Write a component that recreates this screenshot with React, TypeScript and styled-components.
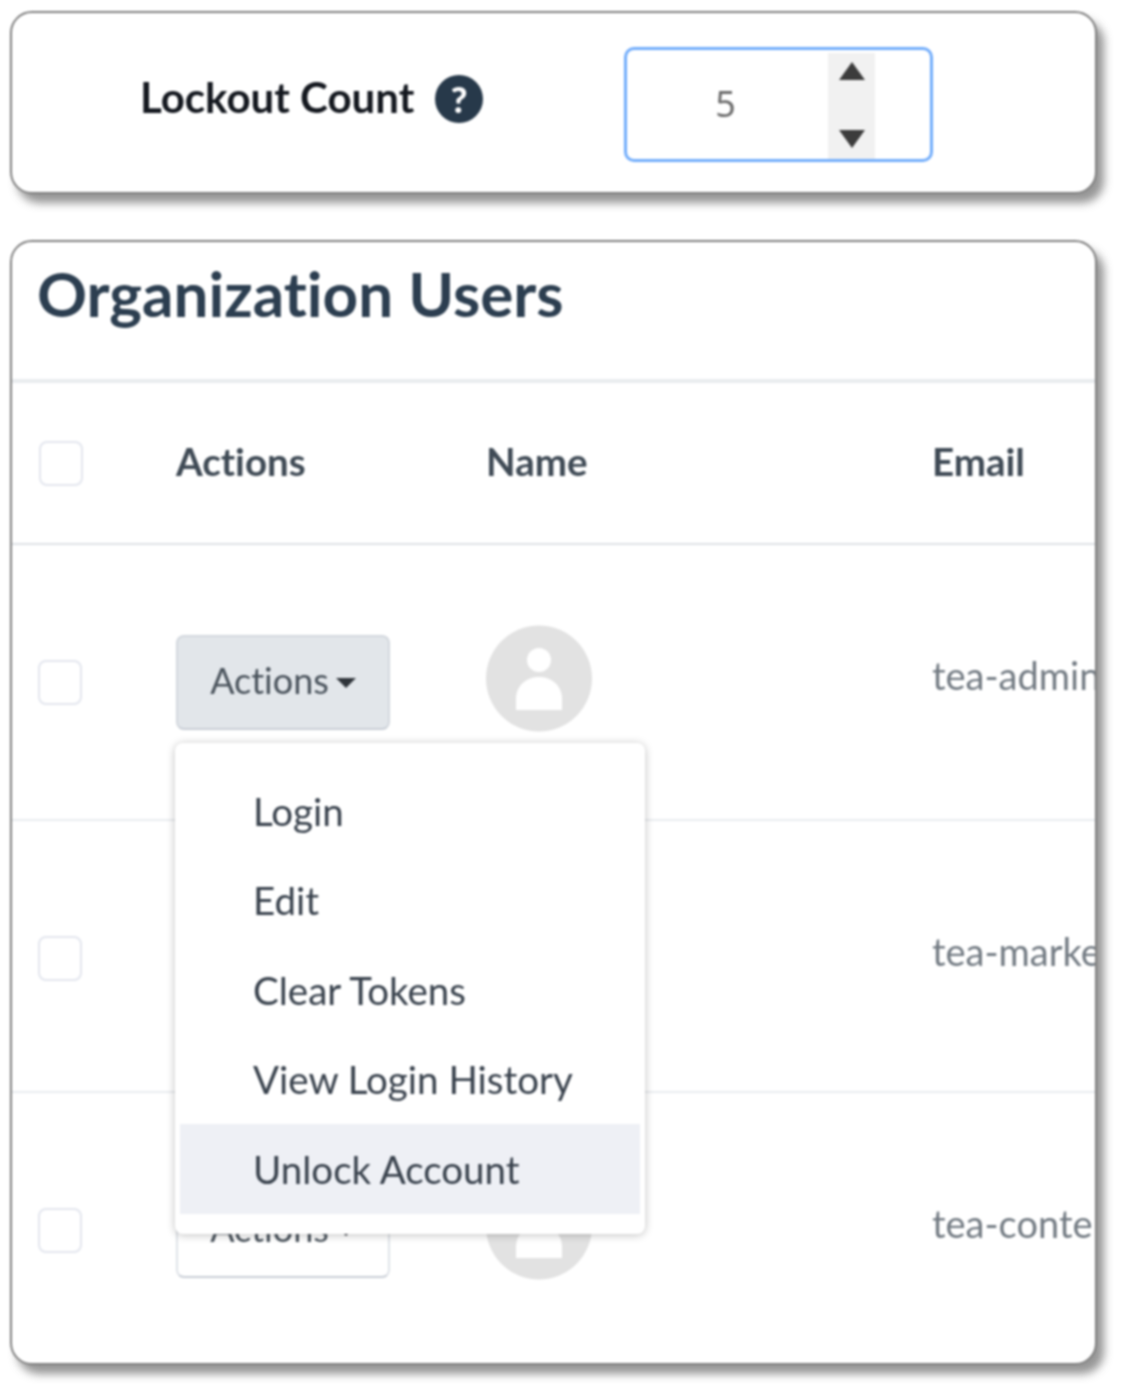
import React from 'react'
import styled, {createGlobalStyle} from 'styled-components'

const GlobalStyle = createGlobalStyle`
    html, body {
        margin: 0;
        padding: 0;
        background: #fff;
    }
    body {
        font-family: Lato, 'Noto Sans', sans-serif;
        font-variant-ligatures: none;
    }
`

const Page = styled.div`
    width: 1132px;
    height: 1397px;
    box-sizing: border-box;
    padding: 11px 35px 0 10px;
    display: flex;
    flex-direction: column;
    gap: 46px;
    overflow: hidden;
    filter: blur(1px);
`

const Card = styled.section`
    position: relative;
    background: #fff;
    border: 2px solid #808080;
    border-radius: 22px;
    box-shadow: 7px 9px 9px rgba(80, 80, 80, 0.6);
`

const SettingCard = styled(Card)`
    height: 183px;
    box-sizing: border-box;
    display: flex;
    align-items: center;
    padding-left: 128px;
`

const SettingLabel = styled.label`
    width: 295px;
    font-size: 42px;
    font-weight: 700;
    color: #14181f;
    white-space: nowrap;
    margin-top: -12px;
`

const HelpBadge = styled.span`
    flex: none;
    width: 48px;
    height: 48px;
    border-radius: 50%;
    background: #27394a;
    color: #fff;
    display: flex;
    align-items: center;
    justify-content: center;
    font-size: 36px;
    font-weight: 900;
    margin-top: -8px;
`

const NumberBox = styled.div`
    width: 309px;
    height: 115px;
    box-sizing: border-box;
    margin-left: 141px;
    margin-top: 3px;
    border: 3px solid #72adfb;
    border-radius: 10px;
    display: flex;
    align-items: stretch;
    padding: 3px 55px 0 0;
`

const NumberValue = styled.span`
    flex: 1;
    display: flex;
    align-items: center;
    justify-content: center;
    padding-right: 4px;
    margin-top: -5px;
    font-size: 36px;
    color: #6c6c6c;
    font-family: 'Noto Sans', sans-serif;
`

const Stepper = styled.div`
    width: 47px;
    background: #f1f1f1;
    display: flex;
    flex-direction: column;
    justify-content: space-between;
    align-items: center;
    padding: 9px 0 11px;
`

const Arrow = styled.svg`
    width: 26px;
    height: 18px;
    fill: #3c3c3c;
`

const UsersCard = styled(Card)`
    height: 1125px;
    box-sizing: border-box;
`

const CardTitle = styled.h2`
    margin: 0;
    height: 141px;
    box-sizing: border-box;
    padding: 15px 0 0 25px;
    border-bottom: 4px solid #e9ecef;
    font-size: 62px;
    line-height: 72px;
    font-weight: 700;
    color: #2c3e50;
    white-space: nowrap;
`

const TableClip = styled.div`
    overflow: hidden;
    border-radius: 0 0 20px 20px;
`

const HeadRow = styled.div`
    display: grid;
    grid-template-columns: 164px 310px 446px 1fr;
    align-items: center;
    height: 162px;
    box-sizing: border-box;
    border-bottom: 2px solid #dee2e6;
    font-size: 38.5px;
    line-height: 44px;
    font-weight: 700;
    color: #3f4a55;
`

const HeadLabel = styled.span`
    margin-top: -4px;
`

const BodyRow = styled.div`
    display: grid;
    grid-template-columns: 164px 310px 446px 1fr;
    height: 272px;
    box-sizing: border-box;
    border-bottom: 2px solid #e9ecef;
    ${HeadRow} + & {
        height: 276px;
    }
    &:last-child {
        border-bottom: 0;
    }
`

const CheckCell = styled.div`
    padding: 115px 0 0 26px;
`

const HeadCheckCell = styled.div`
    padding-left: 27px;
`

const CheckBox = styled.span`
    display: block;
    width: 44px;
    height: 45px;
    box-sizing: border-box;
    border: 2px solid #e3e6ee;
    border-radius: 8px;
    background: #fff;
`

const ActionCell = styled.div`
    padding-top: 90px;
`

const ActionsButton = styled.div<{$open?: boolean}>`
    display: inline-flex;
    align-items: center;
    justify-content: center;
    gap: 7px;
    width: 214px;
    height: 95px;
    box-sizing: border-box;
    padding-bottom: 5px;
    border: 2px solid ${p => (p.$open ? '#d3d8de' : '#dfe3e8')};
    border-bottom-color: #c9ced6;
    border-radius: 8px;
    background: ${p => (p.$open ? '#e2e6ea' : '#fff')};
    font-size: 36px;
    color: #4a535c;
`

const Caret = styled.i`
    width: 0;
    height: 0;
    margin-top: 6px;
    border-top: 10px solid #2f343a;
    border-left: 10px solid transparent;
    border-right: 10px solid transparent;
`

const AvatarCell = styled.div`
    padding-top: 80px;
`

const AvatarSvg = styled.svg`
    display: block;
    width: 106px;
    height: 107px;
`

const EmailCell = styled.div`
    padding-top: 105px;
    font-size: 38px;
    line-height: 50px;
    color: #737b83;
    white-space: nowrap;
`

const Menu = styled.div`
    position: absolute;
    left: 163px;
    top: 501px;
    width: 470px;
    height: 491px;
    box-sizing: border-box;
    padding: 23px 5px 0;
    background: #fff;
    border-radius: 8px;
    box-shadow: 0 1px 9px rgba(0, 0, 0, 0.25);
`

const MenuItem = styled.div<{$active?: boolean}>`
    height: 89.5px;
    display: flex;
    align-items: center;
    padding-left: 73px;
    font-size: 38.5px;
    color: #39424d;
    white-space: nowrap;
    background: ${p => (p.$active ? '#eef0f5' : 'transparent')};
`

const Avatar = () => (
    <AvatarSvg viewBox='0 0 106 107'>
        <circle cx='53' cy='53.5' r='53' fill='#e2e2e2' />
        <circle cx='53' cy='35' r='12' fill='#fff' />
        <path d='M30 85 V74 C30 60 41 52 53 52 C65 52 76 60 76 74 V85 Z' fill='#fff' />
    </AvatarSvg>
)

const users = ['tea-admin', 'tea-marketing', 'tea-content']
const menuItems = ['Login', 'Edit', 'Clear Tokens', 'View Login History', 'Unlock Account']

const App = () => (
    <Page>
        <GlobalStyle />
        <SettingCard>
            <SettingLabel>Lockout Count</SettingLabel>
            <HelpBadge>?</HelpBadge>
            <NumberBox>
                <NumberValue>5</NumberValue>
                <Stepper>
                    <Arrow viewBox='0 0 26 18'>
                        <path d='M13 0 L26 18 L0 18 Z' />
                    </Arrow>
                    <Arrow viewBox='0 0 26 18'>
                        <path d='M0 0 L26 0 L13 18 Z' />
                    </Arrow>
                </Stepper>
            </NumberBox>
        </SettingCard>
        <UsersCard>
            <CardTitle>Organization Users</CardTitle>
            <TableClip>
                <HeadRow>
                    <HeadCheckCell>
                        <CheckBox />
                    </HeadCheckCell>
                    <HeadLabel>Actions</HeadLabel>
                    <HeadLabel>Name</HeadLabel>
                    <HeadLabel>Email</HeadLabel>
                </HeadRow>
                {users.map((user, index) => (
                    <BodyRow key={user}>
                        <CheckCell>
                            <CheckBox />
                        </CheckCell>
                        <ActionCell>
                            <ActionsButton $open={index === 0}>
                                Actions
                                <Caret />
                            </ActionsButton>
                        </ActionCell>
                        <AvatarCell>
                            <Avatar />
                        </AvatarCell>
                        <EmailCell>{user}</EmailCell>
                    </BodyRow>
                ))}
            </TableClip>
            <Menu>
                {menuItems.map(item => (
                    <MenuItem key={item} $active={item === 'Unlock Account'}>
                        {item}
                    </MenuItem>
                ))}
            </Menu>
        </UsersCard>
    </Page>
)

App.displayName = 'App'
export default App
